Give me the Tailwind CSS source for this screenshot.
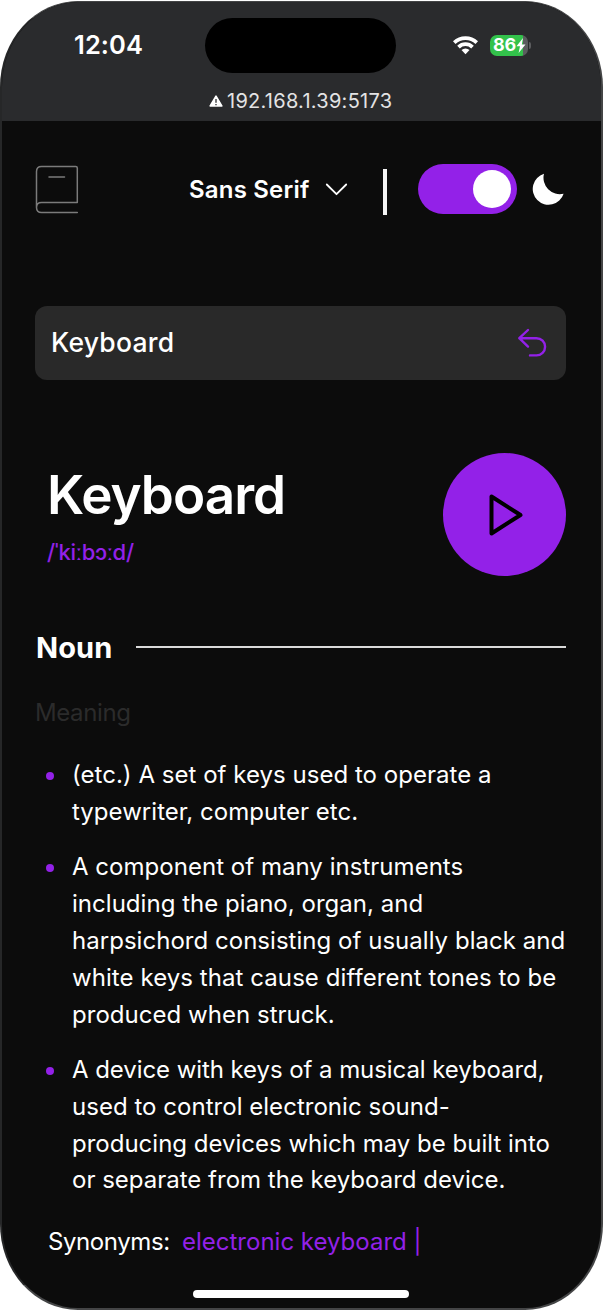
<!DOCTYPE html>
<html lang="en">
<head>
<meta charset="utf-8">
<title>Dictionary</title>
<script src="https://cdn.jsdelivr.net/npm/@tailwindcss/browser@4"></script>
</head>
<body class="bg-white font-['Inter','Liberation_Sans',sans-serif] text-white w-[606px] h-[1310px] overflow-hidden">
<div class="relative mt-px flex h-[1309px] w-[603px] flex-col overflow-hidden rounded-[78px/86px] border-2 border-t-1 border-[#444546] border-l-[#262728] bg-[#0c0c0c]">
  <header class="flex h-[119px] shrink-0 flex-col bg-[#2a2b2d]">
    <div class="flex h-[71px] items-end">
      <div class="w-[203px] pl-[72px] pb-[13px] text-[25.5px] leading-[31px] font-semibold whitespace-nowrap"><span class="tracking-[0.1px]">12:04</span></div>
      <div class="h-[55px] w-[191px] rounded-full bg-black"></div>
      <div class="ml-[56px] flex h-[22px] mb-[17px] items-center">
        <svg class="h-[20px] w-[27px]" viewBox="0 0 27 20" fill="white"><path d="M1 6.2a18.2 18.2 0 0 1 25 0l-2.5 2.7a14.6 14.6 0 0 0-20 0z"/><path d="M5.2 10.7a12 12 0 0 1 16.6 0l-2.6 2.7a8.2 8.2 0 0 0-11.4 0z"/><path d="M9.5 15a6 6 0 0 1 8 0l-4 4.2z"/></svg>
        <div class="ml-[11px] flex h-[21px] w-[38px] items-center rounded-[7px] bg-linear-to-r from-[#33c24b] from-[87%] to-[#5b5c5e] to-[87%] pl-[3px]">
          <span class="text-[18px] leading-none font-bold tracking-[-0.2px]">86</span>
          <svg class="h-[15px] w-[10px]" viewBox="0 0 10 15" fill="white"><path d="M7 0 .5 8.3H4L2.6 15 9.5 6.4H5.8z"/></svg>
        </div>
        <div class="ml-[1px] h-[7px] w-[2px] rounded-r-full bg-[#5b5c5e]"></div>
      </div>
    </div>
    <div class="mt-[13px] flex h-[30px] items-center pl-[207px] text-[#e3e3e4]">
      <svg class="h-[12px] w-[14px]" viewBox="0 0 14 12"><path d="M7 1.2 12.8 11H1.2z" fill="white" stroke="white" stroke-width="1.6" stroke-linejoin="round"/><path d="M7 4v3.7M7 9v1.2" stroke="#2a2b2d" stroke-width="1.3"/></svg>
      <span class="ml-[4px] text-[20px] tracking-[0.27px] whitespace-nowrap">192.168.1.39:5173</span>
    </div>
  </header>

  <main class="flex flex-1 flex-col pr-[35px] pl-[33px]">
    <nav class="mt-[42px] flex h-[52px] items-center">
      <svg class="h-[50px] w-[44px]" viewBox="0 0 44 50" fill="none" stroke="#7b7b7b" stroke-width="1.5" stroke-linecap="round" stroke-linejoin="round"><path d="M42.3 38.5V4q0-1.6-1.6-1.6H6.5Q1.5 2.4 1.5 7.4v36q0 5 5 5h35.8M42.3 38.5H6.5q-5 0-5 5M14 13h15.5"/></svg>
      <span class="mt-[2px] ml-[110px] w-[122px] text-[24px] font-semibold whitespace-nowrap tracking-[0.2px]">Sans Serif</span>
      <svg class="ml-[14px] h-[13px] w-[23px]" viewBox="0 0 23 13" fill="none" stroke="white" stroke-width="1.8" stroke-linecap="round" stroke-linejoin="round"><path d="m1.8 1.5 9.7 9.7 9.7-9.7"/></svg>
      <div class="mt-[5px] ml-[35px] h-[46px] w-[4px] bg-[#f5f5f5]"></div>
      <div class="ml-[31px] flex h-[50px] w-[99px] items-center justify-end rounded-full bg-[#9321e8] pr-[6px]"><div class="size-[38px] rounded-full bg-white"></div></div>
      <svg class="ml-[15px] h-[32px] w-[32px] shrink-0" viewBox="0 0 32 32" fill="white"><path d="M12 .8A15.8 15.8 0 1 0 31.6 20.7 16.3 16.3 0 0 1 12 .8z"/></svg>
    </nav>

    <div class="mt-[91px] flex h-[74px] items-center justify-between rounded-[12px] bg-[#292929] pr-[19px] pl-[16px]">
      <span class="-mt-px text-[26.5px] font-medium tracking-[0.25px]">Keyboard</span>
      <svg class="h-[30px] w-[30px]" viewBox="0 0 30 30" fill="none" stroke="#9321e8" stroke-width="2.4" stroke-linecap="round" stroke-linejoin="round"><path d="M11 2 2.3 10.2 11 18.6M2.3 10.2h17.2a8.6 8.6 0 0 1 0 17.2H13"/></svg>
    </div>

    <section class="mt-[73px] flex h-[124px] items-start justify-between">
      <div class="pl-[12px]">
        <h1 class="mt-[9px] text-[53px] leading-[66px] font-semibold tracking-[-1px]">Keyboard</h1>
        <p class="mt-[9px] text-[22px] leading-[30px] font-medium tracking-[-0.3px] text-[#9321e8] whitespace-nowrap">/ˈkiːbɔːd/</p>
      </div>
      <div class="flex size-[123px] items-center justify-center rounded-full bg-[#9321e8]">
        <svg class="h-[42px] w-[34px] translate-x-px" viewBox="0 0 34 42" fill="none" stroke="black" stroke-width="4" stroke-linejoin="round"><path d="M2.5 2.5v37L31.5 21z"/></svg>
      </div>
    </section>

    <div class="mt-[50px] flex h-[40px] items-center">
      <h2 class="mt-[2px] w-[101px] pl-px text-[29px] font-bold tracking-[0.1px]">Noun</h2>
      <div class="h-[2px] flex-1 bg-[#dadada]"></div>
    </div>
    <p class="mt-[28px] text-[24px] leading-[36px] tracking-[-0.4px] text-[#2b2b2b]">Meaning</p>

    <ul class="mt-[26px] flex flex-col gap-[18.5px] text-[24px] leading-[36.85px] tracking-[0.03px] whitespace-nowrap">
      <li class="flex"><span class="mt-[15px] mr-[18px] ml-[11px] size-[8px] shrink-0 rounded-full bg-[#9321e8]"></span><p>(etc.) A set of keys used to operate a<br>typewriter, computer etc.</p></li>
      <li class="flex"><span class="mt-[15px] mr-[18px] ml-[11px] size-[8px] shrink-0 rounded-full bg-[#9321e8]"></span><p>A component of many instruments<br>including the piano, organ, and<br>harpsichord consisting of usually black and<br><span class="tracking-[0.07px]">white keys that cause different tones to be</span><br>produced when struck.</p></li>
      <li class="flex"><span class="mt-[15px] mr-[18px] ml-[11px] size-[8px] shrink-0 rounded-full bg-[#9321e8]"></span><p><span class="tracking-[-0.07px]">A device with keys of a musical keyboard,</span><br>used to control electronic sound-<br><span class="tracking-normal">producing devices which may be built into<br>or separate from the keyboard device.</span></p></li>
    </ul>
    <div class="mt-[24px] flex pl-[12px] text-[24px] leading-[37px] whitespace-nowrap">
      <span class="w-[135px] pl-px tracking-[-0.4px]">Synonyms:</span><span class="text-[#9321e8]">electronic keyboard |</span>
    </div>
    <div class="mt-[30px] ml-[158px] h-[8px] w-[216px] shrink-0 rounded-full bg-white"></div>
  </main>
</div>
</body>
</html>
